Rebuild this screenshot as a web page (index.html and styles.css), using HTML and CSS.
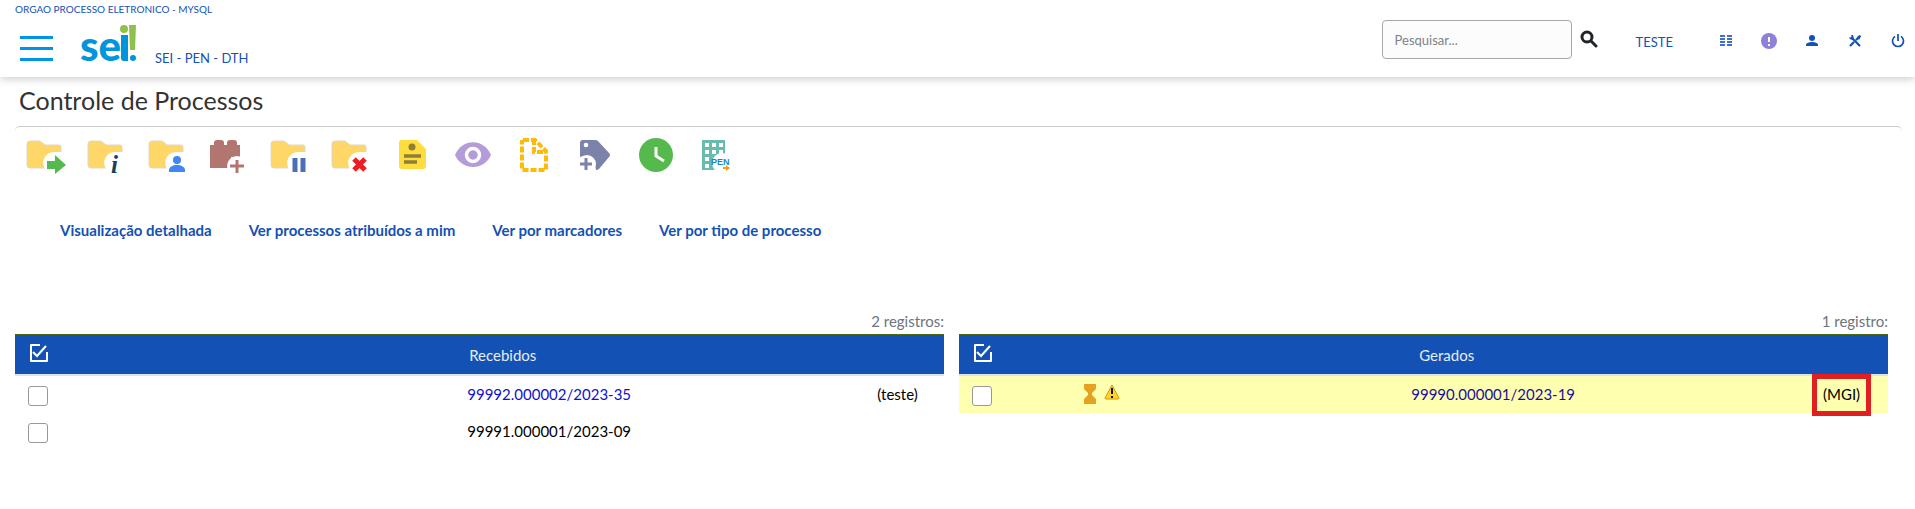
FILE: index.html
```html
<!DOCTYPE html>
<html lang="pt-BR">
<head>
<meta charset="utf-8">
<title>SEI - Controle de Processos</title>
<link rel="stylesheet" href="styles.css">
</head>
<body>
<svg width="0" height="0" class="defs" aria-hidden="true">
  <defs>
    <g id="folder">
      <path d="M4 6h10l5 4h14q2 0 2 2v18q0 3-3 3H4q-3 0-3-3V9q0-3 3-3z" fill="#ffd768" stroke="#dcd9c8" stroke-width="1"/>
      <path d="M36 17h-8a11 11 0 0 0-9 17h17z" fill="#fff"/>
    </g>
    <g id="checked">
      <path d="M12 2H3v16h16v-9" fill="none" stroke="#fff" stroke-width="2" stroke-linejoin="round"/>
      <path d="M5 9l4 4 9-10" fill="none" stroke="#fff" stroke-width="2"/>
    </g>
  </defs>
</svg>

<header class="topbar">
  <div class="org">ORGAO PROCESSO ELETRONICO - MYSQL</div>
  <div class="bar">
    <button class="menu" aria-label="Menu"><span></span><span></span><span></span></button>
    <a class="logo" href="#" aria-label="sei!">
      <svg width="58" height="52" viewBox="0 0 58 52">
        <text x="0" y="39" class="logo-text">se</text>
        <path d="M41 13h7v26h-4q-3 0-3-3z" fill="#0095dc"/>
        <circle cx="44" cy="7" r="4" fill="#8fc04c"/>
        <path d="M49 3h7l-1 25h-5z" fill="#8fc04c"/>
        <circle cx="53" cy="36" r="3" fill="#0095dc"/>
      </svg>
    </a>
    <span class="unit">SEI - PEN - DTH</span>
    <form class="search">
      <input type="text" placeholder="Pesquisar..." aria-label="Pesquisar">
      <button type="button" aria-label="Buscar">
        <svg width="18" height="18" viewBox="0 0 18 18"><circle cx="7" cy="7" r="5" fill="none" stroke="#212529" stroke-width="3"/><path d="M11 11l5 5" stroke="#212529" stroke-width="3" stroke-linecap="round"/></svg>
      </button>
    </form>
    <a class="user" href="#">TESTE</a>
    <nav class="actions">
      <a href="#" aria-label="Painel"><svg viewBox="0 0 18 18"><path d="M3 4h5M10 4h5M3 7h5M10 7h5M3 10h5M10 10h5M3 13h5M10 13h5" stroke="#3f70c4" stroke-width="2"/></svg></a>
      <a href="#" aria-label="Avisos"><svg viewBox="0 0 18 18"><circle cx="9" cy="9" r="8" fill="#8d80d6"/><path d="M9 5v5M9 12v2" stroke="#fff" stroke-width="2"/></svg></a>
      <a href="#" aria-label="Usuário"><svg viewBox="0 0 18 18"><circle cx="9" cy="6" r="3" fill="#1351b4"/><path d="M3 14v-1c0-2 3-3 6-3s6 1 6 3v1z" fill="#1351b4"/></svg></a>
      <a href="#" aria-label="Configurações"><svg viewBox="0 0 18 18"><path d="M5 5l9 9M14 4l-4 4M8 10l-4 4" stroke="#1351b4" stroke-width="2.200"/><path d="M3 5a3 3 0 0 0 5 2L7 3H5l1 2-1 1z" fill="#1351b4"/><path d="M11 5l3-2 1 1-2 4z" fill="#1351b4"/></svg></a>
      <a href="#" aria-label="Sair"><svg viewBox="0 0 18 18"><path d="M9 2v7M6 4.400a5.500 5.500 0 1 0 6 0" fill="none" stroke="#1351b4" stroke-width="1.700"/></svg></a>
    </nav>
  </div>
</header>

<main>
  <h1>Controle de Processos</h1>

  <div class="toolbar">
    <button aria-label="Enviar processo"><svg viewBox="0 0 40 40"><use href="#folder"/><path d="M21 26h8v-6l11 10-11 9v-5h-8z" fill="#56b94e"/></svg></button>
    <button aria-label="Atualizar andamento"><svg viewBox="0 0 40 40"><use href="#folder"/><text x="24" y="38" class="info">i</text></svg></button>
    <button aria-label="Atribuição"><svg viewBox="0 0 40 40"><use href="#folder"/><circle cx="29" cy="25" r="4" fill="#4285f4"/><path d="M21 37v-2c0-3 4-5 8-5s8 2 8 5v2z" fill="#4285f4"/></svg></button>
    <button aria-label="Incluir em bloco"><svg viewBox="0 0 40 40"><path d="M5 10V8q0-3 3-3h4q3 0 3 3v2h3V8q0-3 3-3h4q3 0 3 3v2h3v12H22v11H1V10z" fill="#b37570"/><circle cx="28" cy="31" r="10" fill="#fff"/><path d="M28 25v13M21 31h14" stroke="#b37570" stroke-width="3"/></svg></button>
    <button aria-label="Sobrestar"><svg viewBox="0 0 40 40"><use href="#folder"/><path d="M25 23v14M33 23v14" stroke="#4a70b5" stroke-width="5"/></svg></button>
    <button aria-label="Concluir"><svg viewBox="0 0 40 40"><use href="#folder"/><path d="M23 24l11 11M34 24L23 35" stroke="#ee1c25" stroke-width="5"/></svg></button>
    <button aria-label="Anotações"><svg viewBox="0 0 40 40"><path d="M9 5h16l9 9v17q0 3-3 3H10q-3 0-3-3V8q0-3 2-3z" fill="#ffdd3f"/><circle cx="20" cy="12" r="3.500" fill="#8e7f36"/><path d="M12 21h17M12 27h13" stroke="#8e7f36" stroke-width="3.500"/></svg></button>
    <button aria-label="Acompanhamento especial"><svg viewBox="0 0 40 40"><path d="M2 20C9 3 31 3 38 20 31 36 9 36 2 20z" fill="#b49bd9"/><circle cx="20" cy="20" r="6.500" fill="#b49bd9" stroke="#fff" stroke-width="3.500"/></svg></button>
    <button aria-label="Modelo de documento"><svg viewBox="0 0 40 40"><path d="M9 5h12l11 11v19H8V5" fill="none" stroke="#ffba08" stroke-width="4" stroke-dasharray="6 2"/><path d="M20 4v13h12" fill="none" stroke="#ffba08" stroke-width="4" stroke-dasharray="6 2"/></svg></button>
    <button aria-label="Adicionar marcador"><svg viewBox="0 0 40 40"><path d="M8 5h12q2 0 3 1l11 12q2 2 0 4L24 34q-1 1-3 1l-1-5-12-9-3 1V8q0-3 3-3z" fill="#7c83ab"/><circle cx="11" cy="10" r="2.300" fill="#fff"/><circle cx="12" cy="29" r="9" fill="#fff"/><path d="M11 23v12M5 29h12" stroke="#7c83ab" stroke-width="3"/></svg></button>
    <button aria-label="Controle de prazo"><svg viewBox="0 0 40 40"><circle cx="20" cy="20" r="17" fill="#56b94e"/><path d="M20 12v9l8 5" fill="none" stroke="#fff" stroke-width="3"/></svg></button>
    <button aria-label="Processos em tramitação PEN"><svg viewBox="0 0 40 40"><path d="M5 5h23v30H5z" fill="#67bcae"/><path d="M8 10h4M15 10h4M22 10h4M8 17h4M15 17h4M22 17h4M8 24h4M8 31h4" stroke="#fff" stroke-width="4"/><circle cx="25" cy="28" r="10" fill="#fff"/><text x="14" y="30" class="pen">PEN</text><path d="M26 32h3v-2l4 3-4 3v-2h-3z" fill="#f59c1a"/></svg></button>
  </div>

  <nav class="views">
    <a href="#">Visualização detalhada</a>
    <a href="#">Ver processos atribuídos a mim</a>
    <a href="#">Ver por marcadores</a>
    <a href="#">Ver por tipo de processo</a>
  </nav>

  <div class="lists">
    <table>
      <caption>2 registros:</caption>
      <colgroup><col class="c-check"><col class="c-icons"><col class="c-number"><col class="c-user"></colgroup>
      <thead>
        <tr><th><button aria-label="Selecionar todos os recebidos"><svg width="22" height="20"><use href="#checked"/></svg></button></th><th colspan="3">Recebidos</th></tr>
      </thead>
      <tbody>
        <tr><td><input type="checkbox" aria-label="99992.000002/2023-35"></td><td></td><td><a href="#" class="fresh">99992.000002/2023-35</a></td><td>(<a href="#">teste</a>)</td></tr>
        <tr><td><input type="checkbox" aria-label="99991.000001/2023-09"></td><td></td><td><a href="#">99991.000001/2023-09</a></td><td></td></tr>
      </tbody>
    </table>
    <table>
      <caption>1 registro:</caption>
      <colgroup><col class="c-check"><col class="c-icons"><col class="c-number"><col class="c-user"></colgroup>
      <thead>
        <tr><th><button aria-label="Selecionar todos os gerados"><svg width="22" height="20"><use href="#checked"/></svg></button></th><th colspan="3">Gerados</th></tr>
      </thead>
      <tbody>
        <tr class="marked"><td><input type="checkbox" aria-label="99990.000001/2023-19"></td>
          <td><div class="flags">
            <svg width="12" height="20" viewBox="0 0 12 20"><path d="M0 0h12v5L8 9v2l4 4v5H0v-5l4-4V9L0 5z" fill="#e5a122"/></svg>
            <svg width="16" height="16" viewBox="0 0 16 16"><path d="M8 1l7 13q0 1-1 1H2q-1 0-1-1z" fill="#ffd426" stroke="#c99a16" stroke-linejoin="round"/><path d="M8 4v6M8 12v2" stroke="#111" stroke-width="2"/></svg>
          </div></td>
          <td><a href="#" class="seen">99990.000001/2023-19</a></td><td><span class="highlight">(<a href="#">MGI</a>)</span></td></tr>
      </tbody>
    </table>
  </div>
</main>
</body>
</html>
```
FILE: styles.css
```css
* { box-sizing: border-box; }
body {
  margin: 0;
  background: #fff;
  color: #000;
  font: 15px/20px Lato, "Open Sans", sans-serif;
}
a { color: inherit; text-decoration: none; }
button { padding: 0; border: 0; background: none; cursor: pointer; }
svg { display: block; }
.defs { position: absolute; }

.topbar {
  height: 77px;
  padding-left: 15px;
  box-shadow: 0 2px 8px rgba(0, 0, 0, .2);
  color: #1351b4;
}
.org { padding-top: 2px; font-size: 10px; line-height: 14px; }
.bar { display: flex; align-items: flex-start; padding-right: 8px; }
.menu { display: flex; flex-direction: column; gap: 8px; margin: 20px 27px 0 5px; }
.menu span { width: 33px; height: 3px; background: #0094e8; }
.logo { margin-top: 6px; }
.logo-text { font: 900 42px Lato, sans-serif; fill: #0095dc; }
.unit { margin: 32px auto 0 17px; font-size: 13px; line-height: 20px; }
.search { display: flex; gap: 8px; margin-top: 4px; }
.search input {
  width: 190px;
  height: 39px;
  padding: 0 12px;
  border: 1px solid #a4a9a9;
  border-radius: 4px;
  background: #fcfcfc;
  font: 13px Lato, sans-serif;
}
.search input::placeholder { color: #7b8288; }
.search button { align-self: flex-start; margin-top: 10px; }
.user { margin: 16px 44px 0 38px; font-size: 13px; line-height: 20px; }
.actions { display: flex; gap: 25px; margin-top: 16px; }
.actions svg { width: 18px; height: 18px; }

main { padding: 0 27px 16px 15px; }
h1 {
  margin: 0 -14px 0 0;
  padding: 7px 4px 10px;
  font-size: 25px;
  line-height: 32px;
  font-weight: 400;
  color: #333;
}
.toolbar {
  display: flex;
  gap: 21px;
  margin-right: -14px;
  padding: 8px 11px 0;
  border-top: 1px solid #ccc;
  border-radius: 5px;
}
.toolbar svg { width: 40px; height: 40px; }
.info { font: italic bold 25px "Liberation Serif", serif; fill: #17405c; }
.pen { font: bold 9px "Liberation Sans", sans-serif; fill: #1c86c7; }

.views {
  display: flex;
  gap: 37px;
  padding: 45px 45px 0;
  font-weight: 700;
  color: #1351b4;
}

.lists { display: grid; grid-template-columns: 1fr 1fr; gap: 15px; margin-top: 71px; align-items: start; }
table { width: 100%; table-layout: fixed; border-collapse: separate; border-spacing: 0; }
caption { padding-bottom: 3px; text-align: right; color: #6c757d; }
.c-check { width: 5%; }
.c-icons { width: 20%; }
.c-user { width: 10%; }
th, td { padding: 0; text-align: center; vertical-align: middle; }
th {
  height: 42px;
  border-top: 1px solid #4b6a12;
  border-bottom: 2px solid #dee2e6;
  background: #1351b4;
  color: #e8ecf3;
  font-weight: 400;
}
th:first-child, td:first-child { padding-left: 13px; text-align: left; }
td { height: 37px; padding-bottom: 2px; }
td input {
  display: block;
  appearance: none;
  width: 20px;
  height: 20px;
  margin: 4px 0 0;
  border: 1px solid #999;
  border-radius: 3px;
  background: #fff;
}
.marked { background: #ffffb0; }
.flags { display: flex; justify-content: center; gap: 8px; padding-left: 8px; }
.fresh { color: #1010d0; }
.seen { color: #1a0f9c; }
.highlight { position: relative; }
.highlight::after { content: ""; position: absolute; inset: -11px -11px -13px; border: 5px solid #e02020; }
```
